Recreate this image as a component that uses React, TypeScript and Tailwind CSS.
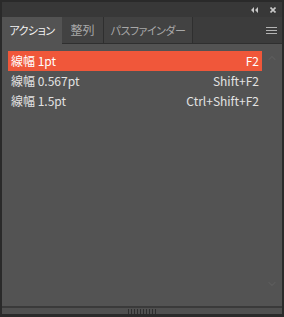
import { ChevronUp, ChevronDown } from 'lucide-react';

const actions = [
  { label: '線幅 1pt', key: 'F2', active: true },
  { label: '線幅 0.567pt', key: 'Shift+F2', active: false },
  { label: '線幅 1.5pt', key: 'Ctrl+Shift+F2', active: false },
];

const tabs = [
  { label: 'アクション', width: 'w-[60px]', active: true, kana: true },
  { label: '整列', width: 'w-[42px]', active: false, kana: false },
  { label: 'パスファインダー', width: 'w-[89px]', active: false, kana: true },
];

export default function App() {
  return (
    <div
      className="w-[284px] h-[317px] bg-[#2a2a2a] p-[2px] pb-[3px] flex flex-col"
      style={{ fontFamily: '"Noto Sans CJK JP", "Noto Sans", sans-serif' }}
    >
      {/* title bar */}
      <div className="h-[15px] bg-[#383838] flex items-center justify-end gap-[12px] pr-[6px] shrink-0">
        <svg width="7" height="6" viewBox="0 0 7 6" className="text-[#c8c8c8]">
          <path d="M3 0 L0 3 L3 6 Z M7 0 L4 3 L7 6 Z" fill="currentColor" />
        </svg>
        <svg width="6" height="6" viewBox="0 0 6 6" className="text-[#c8c8c8]">
          <path d="M0.5 0.5 L5.5 5.5 M5.5 0.5 L0.5 5.5" stroke="currentColor" strokeWidth="1.6" />
        </svg>
      </div>

      {/* tab row */}
      <div className="h-[27px] flex bg-[#3c3c3c] shrink-0 [font-feature-settings:'palt'] whitespace-nowrap">
        {tabs.map((t) => (
          <div
            key={t.label}
            className={`${t.width} flex items-center justify-center ${
              t.kana ? 'text-[11px] tracking-[-0.5px]' : 'text-[12px]'
            } ${
              t.active
                ? 'bg-[#535353] text-[#f2f2f2]'
                : 'bg-[#424242] border-r border-b border-[#2f2f2f] text-[#a8a8a8]'
            }`}
          >
            {t.label}
          </div>
        ))}
        <div className="flex-1 border-b border-[#2f2f2f] flex items-center justify-end pr-[5px]">
          <div className="w-[11px] flex flex-col gap-[2px]">
            <div className="h-px bg-[#b4b4b4]" />
            <div className="h-px bg-[#b4b4b4]" />
            <div className="h-px bg-[#b4b4b4]" />
          </div>
        </div>
      </div>

      {/* content */}
      <div className="flex-1 bg-[#535353] flex pt-[7px] pl-[6px]">
        <div className="flex-1 flex flex-col">
          {actions.map((a) => (
            <div
              key={a.label}
              className={`h-[20px] flex items-center justify-between pl-[3px] pr-[3px] text-[12px] whitespace-nowrap ${
                a.active ? 'bg-[#f0573a] text-white' : 'text-[#e2e2e2]'
              }`}
            >
              <span>{a.label}</span>
              <span>{a.key}</span>
            </div>
          ))}
        </div>
        <div className="w-[20px] flex flex-col items-center justify-between pt-[1px] pb-[16px] text-[#5c5c5c]">
          <ChevronUp size={12} strokeWidth={2.5} />
          <ChevronDown size={12} strokeWidth={2.5} />
        </div>
      </div>

      {/* footer with grip */}
      <div className="h-[2px] bg-[#3a3a3a] shrink-0" />
      <div className="h-[6px] bg-[#505050] flex justify-center items-center shrink-0">
        <div className="flex gap-[2px] h-[5px]">
          {[...Array(10)].map((_, i) => (
            <div key={i} className="w-px bg-[#2e2e2e]" />
          ))}
        </div>
      </div>
    </div>
  );
}
